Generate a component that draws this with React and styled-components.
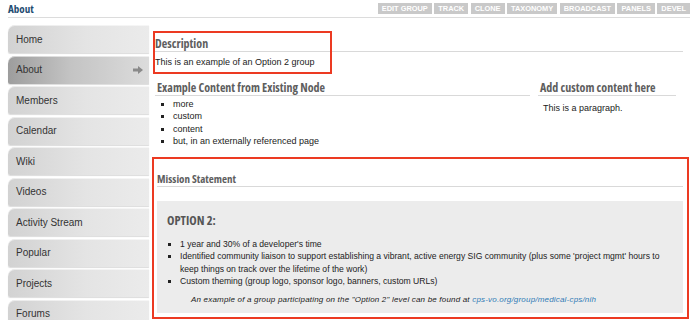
import React from "react";
import styled, { createGlobalStyle } from "styled-components";

const GlobalStyle = createGlobalStyle`
  html, body { margin: 0; padding: 0; background: #fff; }
  body { font-family: "Liberation Sans", Arial, sans-serif; color: #222; }
`;

const Page = styled.div`
  padding: 0 10px 0 8px;
  height: 320px;
  overflow: hidden;
`;

const TopBar = styled.div`
  display: flex;
  justify-content: space-between;
  align-items: flex-start;
  height: 17px;
  border-bottom: 1px solid #dcdcdc;
`;

const PageTitle = styled.h1`
  margin: 2px 0 0;
  font-family: "Open Sans", sans-serif;
  font-stretch: 80%;
  font-weight: bold;
  font-size: 11px;
  line-height: 14px;
  color: #1f4d72;
`;

const Tabs = styled.div`
  display: flex;
  gap: 2.5px;
  margin-top: 3px;
`;

const Tab = styled.span`
  display: block;
  height: 11px;
  line-height: 11px;
  padding: 0 4px;
  background: #c9c9c9;
  color: #fff;
  font-weight: bold;
  font-size: 7.4px;
  text-transform: uppercase;
`;

const Main = styled.div`
  display: flex;
  margin-top: 7px;
`;

const Sidebar = styled.nav`
  width: 141px;
  flex: none;
  display: flex;
  flex-direction: column;
  gap: 2.5px;
`;

const NavItem = styled.div`
  height: 28px;
  flex: none;
  display: flex;
  align-items: center;
  justify-content: space-between;
  padding: 0 6px 0 8px;
  font-size: 10px;
  color: #333;
  border-top-left-radius: 7px;
  border-bottom-left-radius: 2px;
  background: ${(p) =>
    p.$active
      ? "linear-gradient(to right, #9d9d9d, #c4c4c4 45%, #dcdcdc)"
      : "linear-gradient(to right, #d2d2d2, #e4e4e4 55%, #ebebeb)"};
  box-shadow: inset 0 1px 0 rgba(255, 255, 255, 0.55), 0 1px 1px rgba(0, 0, 0, 0.14);
`;

const Content = styled.main`
  flex: 1;
  min-width: 0;
  padding: 11px 7px 0 5px;
  margin-left: 1px;
`;

const Section = styled.section`
  position: relative;
`;

const Heading = styled.h2`
  margin: 0;
  font-family: "Open Sans", sans-serif;
  font-stretch: 75%;
  font-weight: 700;
  font-size: ${(p) => p.$size || 12}px;
  line-height: 15px;
  color: #5e5e5e;
  padding-left: ${(p) => p.$indent || 0}px;
  border-bottom: 1px solid #d9d9d9;
`;

const Text = styled.p`
  margin: ${(p) => p.$m || "4px 0 0"};
  padding-left: ${(p) => p.$indent || 0}px;
  font-size: 9px;
  line-height: 12px;
  color: #222;
`;

const Annotation = styled.div`
  position: absolute;
  left: -2px;
  top: -5px;
  width: 179px;
  height: 43px;
  box-sizing: border-box;
  border: 2px solid #ec3a22;
  pointer-events: none;
`;

const Columns = styled.div`
  display: grid;
  grid-template-columns: 1fr 138px;
  column-gap: 8px;
  margin: 12px 7px 0 0;
`;

const List = styled.ul`
  margin: ${(p) => p.$m || "2px 0 0"};
  padding-left: ${(p) => p.$pad || 18}px;
  list-style: square;
  font-size: ${(p) => p.$size || 9}px;
  line-height: 12.3px;
  color: #222;
`;

const Mission = styled.section`
  margin: 10px -6px 0 -3px;
  padding: 12px 4px 4px 3px;
  border: 2px solid #ec3a22;
`;

const OptionBox = styled.div`
  margin-top: 14px;
  background: #ececec;
  padding: 12px 10px 7px;
`;

const OptionTitle = styled.h3`
  margin: 0;
  font-family: "Open Sans", sans-serif;
  font-stretch: 75%;
  font-weight: 700;
  font-size: 12.5px;
  line-height: 15px;
  color: #555;
`;

const Note = styled.p`
  margin: 7px 0 0 24px;
  font-size: 8px;
  letter-spacing: 0.19px;
  line-height: 12px;
  font-style: italic;
  color: #222;
`;

const Link = styled.a`
  color: #2f7bb6;
  text-decoration: none;
`;

const Arrow = () => (
  <svg width="10" height="8" viewBox="0 0 10 8">
    <path d="M0 2.6 H5 V0 L10 4 L5 8 V5.4 H0 Z" fill="#8a8a8a" />
  </svg>
);

const tabs = ["Edit group", "Track", "Clone", "Taxonomy", "Broadcast", "Panels", "Devel"];
const nav = [
  "Home",
  "About",
  "Members",
  "Calendar",
  "Wiki",
  "Videos",
  "Activity Stream",
  "Popular",
  "Projects",
  "Forums",
];

export default function App() {
  return (
    <>
      <GlobalStyle />
      <Page>
        <TopBar>
          <PageTitle>About</PageTitle>
          <Tabs>
            {tabs.map((t) => (
              <Tab key={t}>{t}</Tab>
            ))}
          </Tabs>
        </TopBar>
        <Main>
          <Sidebar>
            {nav.map((n) => (
              <NavItem key={n} $active={n === "About"}>
                <span>{n}</span>
                {n === "About" && <Arrow />}
              </NavItem>
            ))}
          </Sidebar>
          <Content>
            <Section>
              <Heading>Description</Heading>
              <Text>This is an example of an Option 2 group</Text>
              <Annotation />
            </Section>
            <Columns>
              <Section>
                <Heading $indent={2}>Example Content from Existing Node</Heading>
                <List>
                  <li>more</li>
                  <li>custom</li>
                  <li>content</li>
                  <li>but, in an externally referenced page</li>
                </List>
              </Section>
              <Section>
                <Heading $indent={2}>Add custom content here</Heading>
                <Text $m="6px 0 0" $indent={5}>This is a paragraph.</Text>
              </Section>
            </Columns>
            <Mission>
              <Heading $size={11}>Mission Statement</Heading>
              <OptionBox>
                <OptionTitle>OPTION 2:</OptionTitle>
                <List $m="10px 0 0" $pad={13} $size={8.6}>
                  <li>1 year and 30% of a developer's time</li>
                  <li>
                    Identified community liaison to support establishing a vibrant, active energy SIG
                    community (plus some 'project mgmt' hours to keep things on track over the lifetime
                    of the work)
                  </li>
                  <li>Custom theming (group logo, sponsor logo, banners, custom URLs)</li>
                </List>
                <Note>
                  An example of a group participating on the "Option 2" level can be found at{" "}
                  <Link href="#">cps-vo.org/group/medical-cps/nih</Link>
                </Note>
              </OptionBox>
            </Mission>
          </Content>
        </Main>
      </Page>
    </>
  );
}
